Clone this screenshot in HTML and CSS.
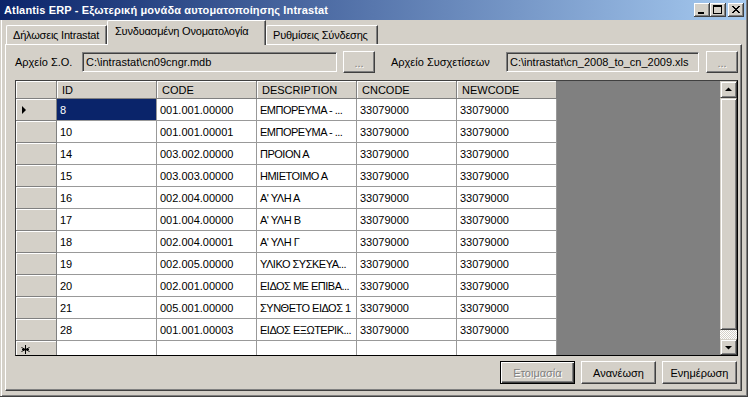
FILE: index.html
```html
<!DOCTYPE html>
<html lang="el">
<head>
  <meta charset="UTF-8">
  <meta name="viewport" content="width=device-width, initial-scale=1.0">
  <title>Atlantis ERP - Intrastat</title>
  <link rel="stylesheet" href="styles.css">
</head>
<body>
  <div class="window">
    <div class="titlebar">
      <span class="title">Atlantis ERP - Εξωτερική μονάδα αυτοματοποίησης Intrastat</span>
      <div class="caption-buttons">
        <button class="cap-btn">
          <svg viewBox="0 0 16 14" width="16" height="14"><rect x="4" y="9" width="6" height="2" fill="#000"/></svg>
        </button>
        <button class="cap-btn">
          <svg viewBox="0 0 16 14" width="16" height="14"><rect x="3.5" y="2.5" width="8" height="8" fill="none" stroke="#000"/><rect x="3" y="2" width="9" height="2" fill="#000"/></svg>
        </button>
        <button class="cap-btn close">
          <svg viewBox="0 0 16 14" width="16" height="14"><path d="M4 3 L11 10 M5 3 L12 10 M11 3 L4 10 M12 3 L5 10" stroke="#000" stroke-width="1" fill="none"/></svg>
        </button>
      </div>
    </div>

    <div class="client">
      <div class="tabs">
        <div class="tab tab-first">Δήλωσεις Intrastat</div>
        <div class="tab active">Συνδυασμένη Ονοματολογία</div>
        <div class="tab tab-last">Ρυθμίσεις Σύνδεσης</div>
      </div>

      <div class="panel">
        <div class="files">
          <label class="file-label first">Αρχείο Σ.Ο.</label>
          <div class="textbox wide">C:\intrastat\cn09cngr.mdb</div>
          <button class="btn dots" disabled>...</button>
          <label class="file-label second">Αρχείο Συσχετίσεων</label>
          <div class="textbox narrow">C:\intrastat\cn_2008_to_cn_2009.xls</div>
          <button class="btn dots last" disabled>...</button>
        </div>

        <div class="grid">
          <div class="grid-view">
            <table class="data">
              <colgroup>
                <col class="c-head">
                <col class="c-data"><col class="c-data"><col class="c-data"><col class="c-data"><col class="c-data">
              </colgroup>
              <thead>
                <tr>
                  <th class="corner"></th>
                  <th>ID</th>
                  <th>CODE</th>
                  <th>DESCRIPTION</th>
                  <th>CNCODE</th>
                  <th>NEWCODE</th>
                </tr>
              </thead>
              <tbody>
                <tr>
                  <th class="row-head"><svg class="marker" viewBox="0 0 6 8" width="6" height="8"><polygon points="1,0 5,4 1,8" fill="#000"/></svg></th>
                  <td class="selected">8</td><td>001.001.00000</td><td class="desc">ΕΜΠΟΡΕΥΜΑ - ...</td><td>33079000</td><td>33079000</td>
                </tr>
                <tr><th class="row-head"></th><td>10</td><td>001.001.00001</td><td class="desc">ΕΜΠΟΡΕΥΜΑ - ...</td><td>33079000</td><td>33079000</td></tr>
                <tr><th class="row-head"></th><td>14</td><td>003.002.00000</td><td class="desc">ΠΡΟΙΟΝ Α</td><td>33079000</td><td>33079000</td></tr>
                <tr><th class="row-head"></th><td>15</td><td>003.003.00000</td><td class="desc">ΗΜΙΕΤΟΙΜΟ Α</td><td>33079000</td><td>33079000</td></tr>
                <tr><th class="row-head"></th><td>16</td><td>002.004.00000</td><td class="desc">Α' ΥΛΗ Α</td><td>33079000</td><td>33079000</td></tr>
                <tr><th class="row-head"></th><td>17</td><td>001.004.00000</td><td class="desc">Α' ΥΛΗ Β</td><td>33079000</td><td>33079000</td></tr>
                <tr><th class="row-head"></th><td>18</td><td>002.004.00001</td><td class="desc">Α' ΥΛΗ Γ</td><td>33079000</td><td>33079000</td></tr>
                <tr><th class="row-head"></th><td>19</td><td>002.005.00000</td><td class="desc">ΥΛΙΚΟ ΣΥΣΚΕΥΑ...</td><td>33079000</td><td>33079000</td></tr>
                <tr><th class="row-head"></th><td>20</td><td>002.001.00000</td><td class="desc">ΕΙΔΟΣ ΜΕ ΕΠΙΒΑ...</td><td>33079000</td><td>33079000</td></tr>
                <tr><th class="row-head"></th><td>21</td><td>005.001.00000</td><td class="desc">ΣΥΝΘΕΤΟ ΕΙΔΟΣ 1</td><td>33079000</td><td>33079000</td></tr>
                <tr><th class="row-head"></th><td>28</td><td>001.001.00003</td><td class="desc">ΕΙΔΟΣ ΕΞΩΤΕΡΙΚ...</td><td>33079000</td><td>33079000</td></tr>
                <tr class="new-row">
                  <th class="row-head"><svg class="star" viewBox="0 0 9 9" width="9" height="9"><path d="M4.5 0 V9 M0.5 2.5 L8.5 6.5 M0.5 6.5 L8.5 2.5 M1 4.5 H8" stroke="#000" stroke-width="1" fill="none"/></svg></th>
                  <td></td><td></td><td></td><td></td><td></td>
                </tr>
              </tbody>
            </table>
          </div>
          <div class="vscroll">
            <div class="sb-btn"><svg viewBox="0 0 15 15" width="15" height="15"><polygon points="4,9 11,9 7.5,5.5" fill="#000"/></svg></div>
            <div class="sb-thumb"></div>
            <div class="sb-track"></div>
            <div class="sb-btn down"><svg viewBox="0 0 15 14" width="15" height="14"><polygon points="4,6 11,6 7.5,9.5" fill="#000"/></svg></div>
          </div>
        </div>

        <div class="actions">
          <button class="btn action default" disabled>Ετοιμασία</button>
          <button class="btn action">Ανανέωση</button>
          <button class="btn action">Ενημέρωση</button>
        </div>
      </div>
    </div>
  </div>
</body>
</html>
```

FILE: styles.css
```css
* {
  margin: 0;
  padding: 0;
  box-sizing: border-box;
}

body {
  font-family: 'Liberation Sans', Arial, sans-serif;
  font-size: 11px;
  color: #000;
  background: #d4d0c8;
}

.window {
  width: 748px;
  height: 397px;
  display: flex;
  flex-direction: column;
  background: #d4d0c8;
  border-right: 1px solid #404040;
  border-bottom: 1px solid #404040;
  box-shadow: inset 1px 0 #d4d0c8, inset 2px 0 #fff, inset -1px -1px #808080;
}

/* title bar */
.titlebar {
  height: 20px;
  margin-right: 1px;
  display: flex;
  align-items: center;
  justify-content: space-between;
  padding: 0 2px 0 4px;
  background: linear-gradient(to right, #0a246a, #a6caf0);
}

.title {
  color: #fff;
  font-weight: bold;
  font-size: 11px;
  letter-spacing: 0.15px;
  white-space: nowrap;
}

.caption-buttons {
  display: flex;
}

.cap-btn {
  width: 16px;
  height: 14px;
  display: block;
  background: #d4d0c8;
  border: none;
  box-shadow: inset -1px -1px #404040, inset 1px 1px #fff, inset -2px -2px #808080;
}

.cap-btn.close {
  margin-left: 2px;
}

.cap-btn svg {
  display: block;
}

/* client area */
.client {
  flex: 1;
  display: flex;
  flex-direction: column;
  padding: 0 5px 5px 5px;
}

.tabs {
  height: 24px;
  display: flex;
  align-items: flex-end;
  padding-left: 1px;
}

.tab {
  height: 19px;
  padding: 3px 0 0 6px;
  white-space: nowrap;
  letter-spacing: -0.2px;
  border-top: 1px solid #fff;
  border-left: 1px solid #fff;
  border-right: 1px solid #404040;
  box-shadow: inset -1px 0 #808080;
  border-top-left-radius: 2px;
}

.tab.tab-first {
  width: 101px;
}

.tab.active {
  position: relative;
  z-index: 1;
  height: 25px;
  width: 159px;
  margin-bottom: -1px;
  padding: 4px 0 0 7px;
  background: #d4d0c8;
}

.tab.tab-last {
  width: 112px;
}

.panel {
  flex: 1;
  display: flex;
  flex-direction: column;
  padding: 6px 0 0 9px;
  border-top: 1px solid #fff;
  border-left: 1px solid #fff;
  border-right: 1px solid #404040;
  border-bottom: 1px solid #404040;
  box-shadow: inset -1px -1px #808080;
}

/* file pickers */
.files {
  height: 22px;
  display: flex;
  align-items: center;
}

.file-label.first {
  width: 67px;
}

.file-label.second {
  width: 115px;
  margin-left: 16px;
}

.textbox {
  height: 20px;
  padding: 3px 0 0 3px;
  white-space: nowrap;
  overflow: hidden;
  background: #d4d0c8;
  border: 1px solid;
  border-color: #808080 #fff #fff #808080;
  box-shadow: inset 1px 1px #404040, inset -1px -1px #d4d0c8;
}

.textbox.wide {
  width: 255px;
}

.textbox.narrow {
  width: 193px;
}

.btn {
  font-family: 'Liberation Sans', Arial, sans-serif;
  font-size: 11px;
  color: #000;
  background: #d4d0c8;
  border: 1px solid;
  border-color: #fff #404040 #404040 #fff;
  box-shadow: inset -1px -1px #808080;
}

.btn:disabled {
  color: #808080;
  text-shadow: 1px 1px #fff;
}

.btn.dots {
  width: 32px;
  height: 22px;
  margin-left: 6px;
  padding-top: 2px;
}

.btn.dots.last {
  margin-left: 7px;
}

/* data grid */
.grid {
  width: 723px;
  height: 276px;
  margin-top: 7px;
  display: flex;
  border: 1px solid #000;
  border-top-color: #404040;
  border-left-color: #404040;
}

.grid-view {
  flex: 1;
  overflow: hidden;
  background: #808080;
}

.data {
  width: 541px;
  table-layout: fixed;
  border-collapse: separate;
  border-spacing: 0;
  background: #fff;
}

.c-head {
  width: 41px;
}

.c-data {
  width: 100px;
}

.data th,
.data td {
  padding: 0 0 0 3px;
  text-align: left;
  font-weight: normal;
  white-space: nowrap;
  overflow: hidden;
  border-right: 1px solid #999;
  border-bottom: 1px solid #999;
}

.data td.desc {
  letter-spacing: -0.5px;
}

.data thead tr {
  height: 18px;
}

.data thead th {
  padding-left: 5px;
  background: #d4d0c8;
  border-right-color: #808080;
  border-bottom-color: #808080;
  box-shadow: inset 1px 1px #fff;
}

.data tbody tr {
  height: 22px;
}

.data .row-head {
  padding: 0 0 0 5px;
  background: #d4d0c8;
  border-right-color: #808080;
  border-bottom-color: #808080;
  box-shadow: inset 1px 1px #fff;
}

.marker,
.star {
  display: block;
}

.new-row .row-head {
  vertical-align: top;
  padding-top: 4px;
}

.data td.selected {
  background: #0a246a;
  color: #fff;
}

/* vertical scrollbar */
.vscroll {
  width: 17px;
  display: flex;
  flex-direction: column;
  background: #d4d0c8;
}

.sb-btn {
  height: 17px;
  background: #d4d0c8;
  border: 1px solid;
  border-color: #d4d0c8 #404040 #404040 #d4d0c8;
  box-shadow: inset 1px 1px #fff, inset -1px -1px #808080;
}

.sb-btn.down {
  height: 16px;
}

.sb-btn svg {
  display: block;
}

.sb-thumb {
  height: 232px;
  border: 1px solid;
  border-color: #d4d0c8 #404040 #404040 #d4d0c8;
  box-shadow: inset 1px 1px #fff, inset -1px -1px #808080;
}

.sb-track {
  flex: 1;
  background-image: conic-gradient(#fff 25%, #d4d0c8 0 50%, #fff 0 75%, #d4d0c8 0);
  background-size: 2px 2px;
}

/* bottom buttons */
.actions {
  display: flex;
  justify-content: flex-end;
  gap: 6px;
  margin-top: 5px;
  padding-right: 4px;
}

.btn.action {
  width: 75px;
  height: 23px;
}

.btn.action.default {
  border: 1px solid #000;
  box-shadow: inset 1px 1px #fff, inset -1px -1px #404040, inset -2px -2px #808080;
}
```
